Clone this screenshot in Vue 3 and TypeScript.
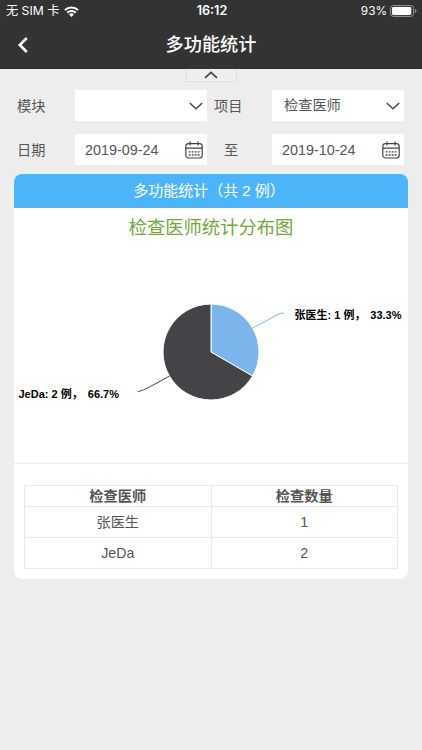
<script setup lang="ts">
import { ref, computed } from 'vue'

interface Slice {
  name: string
  count: number
  color: string
}

const project = ref('检查医师')
const startDate = ref('2019-09-24')
const endDate = ref('2019-10-24')

const slices: Slice[] = [
  { name: '张医生', count: 1, color: '#7cb5ec' },
  { name: 'JeDa', count: 2, color: '#434348' },
]

const total = computed(() => slices.reduce((sum, s) => sum + s.count, 0))

const cx = 197
const cy = 144
const radius = 48

const arcs = computed(() => {
  let from = 0
  return slices.map((s) => {
    const to = from + s.count / total.value
    const point = (t: number) => {
      const a = t * Math.PI * 2
      return `${(cx + radius * Math.sin(a)).toFixed(2)} ${(cy - radius * Math.cos(a)).toFixed(2)}`
    }
    const large = to - from > 0.5 ? 1 : 0
    const d = `M${cx} ${cy}L${point(from)}A${radius} ${radius} 0 ${large} 1 ${point(to)}Z`
    from = to
    return { d, color: s.color }
  })
})

const percent = (s: Slice) => `${((s.count / total.value) * 100).toFixed(1)}%`
</script>

<template>
  <div class="screen">
    <header class="top">
      <div class="status">
        <div class="carrier">
          <span>无 SIM 卡</span>
          <svg width="15" height="11" viewBox="0 0 15 11" fill="none" stroke="#fff" stroke-width="2">
            <path d="M.9 4.100a9.400 9.400 0 0 1 13.200 0" />
            <path d="M3.300 6.700a5.900 5.900 0 0 1 8.400 0" />
            <path d="M5.100 8.400a3.400 3.400 0 0 1 4.800 0L7.500 10.900z" fill="#fff" stroke="none" />
          </svg>
        </div>
        <span class="clock">16:12</span>
        <div class="power">
          <span>93%</span>
          <svg width="27" height="12" viewBox="0 0 27 12">
            <rect x=".6" y=".6" width="23" height="10.8" rx="2.8" fill="none" stroke="#999" />
            <rect x="2" y="2" width="19.3" height="8" rx="1.4" fill="#fff" />
            <path d="M25 4.100q1.400.5 1.400 1.900T25 7.900z" fill="#999" />
          </svg>
        </div>
      </div>
      <nav class="nav">
        <svg class="back" width="10" height="16" viewBox="0 0 10 16" fill="none" stroke="#fff" stroke-width="2.6">
          <path d="M8.800 1 1.800 8l7 7" />
        </svg>
        <h1>多功能统计</h1>
      </nav>
    </header>

    <button class="fold" type="button">
      <svg width="14" height="8" viewBox="0 0 14 8" fill="none" stroke="#444" stroke-width="1.7">
        <path d="M1 6.800 7 1.400l6 5.400" />
      </svg>
    </button>

    <section class="filters">
      <label>模块</label>
      <div class="field">
        <span></span>
        <svg width="14" height="8" viewBox="0 0 14 8" fill="none" stroke="#444" stroke-width="1.4">
          <path d="M.8.9 7 6.700 13.200.9" />
        </svg>
      </div>
      <label>项目</label>
      <div class="field select">
        <span>{{ project }}</span>
        <svg width="14" height="8" viewBox="0 0 14 8" fill="none" stroke="#444" stroke-width="1.4">
          <path d="M.8.9 7 6.700 13.200.9" />
        </svg>
      </div>
      <label>日期</label>
      <div class="field date">
        <span>{{ startDate }}</span>
        <svg width="18" height="18" viewBox="0 0 18 18" fill="none" stroke="#444" stroke-width="1.2">
          <rect x=".8" y="2.6" width="16.4" height="14.4" rx="2.8" />
          <path d="M.8 7.200h16.400M5 .4v4.200M13 .4v4.200" />
          <path d="M3.700 10.800h11M3.700 14h11" stroke-width="1.3" stroke-dasharray="1.8 1.2" />
        </svg>
      </div>
      <label class="to">至</label>
      <div class="field date">
        <span>{{ endDate }}</span>
        <svg width="18" height="18" viewBox="0 0 18 18" fill="none" stroke="#444" stroke-width="1.2">
          <rect x=".8" y="2.6" width="16.4" height="14.4" rx="2.8" />
          <path d="M.8 7.200h16.400M5 .4v4.200M13 .4v4.200" />
          <path d="M3.700 10.800h11M3.700 14h11" stroke-width="1.3" stroke-dasharray="1.8 1.2" />
        </svg>
      </div>
    </section>

    <main class="card">
      <div class="card-head">多功能统计（共 2 例）</div>
      <div class="chart">
        <h2>检查医师统计分布图</h2>
        <svg class="pie" width="394" height="255" viewBox="0 0 394 255">
          <path
            v-for="arc in arcs"
            :key="arc.color"
            :d="arc.d"
            :fill="arc.color"
            stroke="#fff"
            stroke-linejoin="round"
          />
          <path d="M270 105c-5 0-10 3.500-18 8l-13.500 7" fill="none" stroke="#7cb5ec" />
          <path d="M124 183.500c5-.6 10-4 18-8l13.500-7.500" fill="none" stroke="#434348" />
          <text x="280.5" y="111">{{ slices[0].name }}: {{ slices[0].count }} 例，</text>
          <text x="387.5" y="111" text-anchor="end">{{ percent(slices[0]) }}</text>
          <text x="4.5" y="189.5">{{ slices[1].name }}: {{ slices[1].count }} 例，</text>
          <text x="105" y="189.5" text-anchor="end">{{ percent(slices[1]) }}</text>
        </svg>
      </div>
      <table>
        <thead>
          <tr>
            <th>检查医师</th>
            <th>检查数量</th>
          </tr>
        </thead>
        <tbody>
          <tr v-for="s in slices" :key="s.name">
            <td>{{ s.name }}</td>
            <td>{{ s.count }}</td>
          </tr>
        </tbody>
      </table>
    </main>
  </div>
</template>

<style>
body {
  margin: 0;
  background: #ededed;
}
</style>

<style scoped>
.screen {
  box-sizing: border-box;
  height: 750px;
  overflow: hidden;
  background: #ededed;
  color: #555;
  font-family: 'Liberation Sans', 'Noto Sans CJK SC', sans-serif;
  font-size: 14.2px;
}
.top {
  height: 69px;
  background: #333;
  color: #fff;
}
.status {
  display: grid;
  grid-template-columns: 1fr auto 1fr;
  align-items: center;
  height: 22px;
  padding: 0 5px 0 6px;
  font-family: Inter, 'Noto Sans CJK SC', sans-serif;
  font-size: 12.2px;
  line-height: 22px;
}
.carrier,
.power {
  display: flex;
  align-items: center;
  gap: 5px;
}
.power {
  justify-content: flex-end;
  gap: 3px;
  font-size: 11.8px;
}
.clock {
  padding-left: 1px;
  font-size: 12.6px;
  font-weight: 600;
}
.nav {
  display: grid;
  grid-template-columns: 40px 1fr 40px;
  align-items: center;
  height: 46px;
}
.back {
  margin-left: 18px;
}
h1 {
  margin: 0;
  text-align: center;
  font-size: 18.2px;
  line-height: 26px;
  font-weight: 500;
}
.fold {
  display: flex;
  align-items: center;
  justify-content: center;
  box-sizing: border-box;
  width: 51px;
  height: 13px;
  margin: 0 auto;
  padding: 0;
  border: 1px solid #ddd;
  border-top: 0;
  background: #eee;
}
.filters {
  display: grid;
  grid-template-columns: 58px 132px 65px 132px;
  grid-auto-rows: 31px;
  row-gap: 13px;
  padding: 8px 0 0 17px;
}
.filters label {
  line-height: 32px;
}
.filters .field + label {
  padding-left: 7px;
}
.filters .field + label:nth-child(5) {
  padding-left: 0;
}
.filters label.to {
  padding-left: 17px;
}
.field {
  display: flex;
  align-items: center;
  justify-content: space-between;
  padding: 0 4px 0 10px;
  background: #fff;
}
.field.select {
  padding-left: 12px;
}
.field.select span {
  line-height: 21px;
}
.field.date {
  font-size: 14.4px;
}
.card {
  box-sizing: border-box;
  width: 394px;
  height: 405px;
  margin: 9px 0 0 14px;
  border-radius: 8px;
  overflow: hidden;
  background: #fff;
}
.card-head {
  height: 34px;
  padding-right: 4px;
  background: #4cb5f9;
  color: #fff;
  text-align: center;
  font-size: 15px;
  line-height: 34px;
}
.chart {
  height: 255px;
  border-bottom: 1px solid #ededed;
}
h2 {
  height: 0;
  margin: 0;
  text-align: center;
  color: #70a83b;
  font-size: 18.3px;
  font-weight: 400;
  line-height: 39px;
}
.pie {
  display: block;
}
.pie text {
  fill: #000;
  font-size: 11px;
  font-weight: 700;
  white-space: pre;
}
table {
  width: 374px;
  margin: 21px 0 0 10px;
  border-collapse: collapse;
  table-layout: fixed;
}
th,
td {
  box-sizing: border-box;
  height: 31px;
  padding: 0;
  border: 1px solid #e8e8e8;
  text-align: center;
  line-height: 20px;
}
th {
  height: 21px;
  font-weight: 700;
}
</style>
